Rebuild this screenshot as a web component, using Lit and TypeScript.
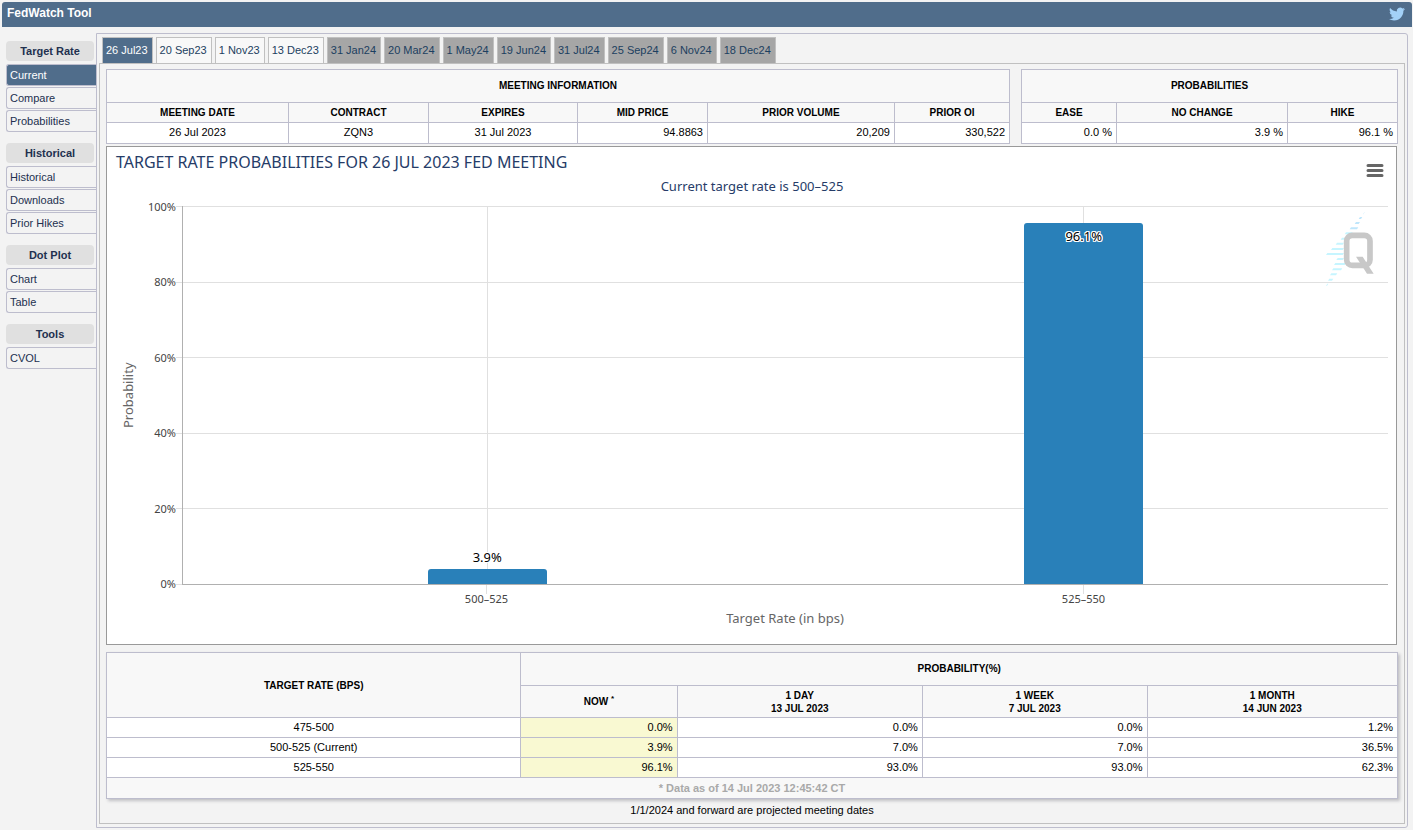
import { LitElement, html, css, svg } from "lit";
import { customElement, property, state } from "lit/decorators.js";
import { classMap } from "lit/directives/class-map.js";

interface Column {
  label: string;
  value: string;
  width: number;
  align: "center" | "right";
}

const MEETINGS = [
  { label: "26 Jul23", projected: false },
  { label: "20 Sep23", projected: false },
  { label: "1 Nov23", projected: false },
  { label: "13 Dec23", projected: false },
  { label: "31 Jan24", projected: true },
  { label: "20 Mar24", projected: true },
  { label: "1 May24", projected: true },
  { label: "19 Jun24", projected: true },
  { label: "31 Jul24", projected: true },
  { label: "25 Sep24", projected: true },
  { label: "6 Nov24", projected: true },
  { label: "18 Dec24", projected: true },
];

const MENU = [
  { title: "Target Rate", items: ["Current", "Compare", "Probabilities"] },
  { title: "Historical", items: ["Historical", "Downloads", "Prior Hikes"] },
  { title: "Dot Plot", items: ["Chart", "Table"] },
  { title: "Tools", items: ["CVOL"] },
];

const MEETING_INFO: Column[] = [
  { label: "Meeting Date", value: "26 Jul 2023", width: 182, align: "center" },
  { label: "Contract", value: "ZQN3", width: 140, align: "center" },
  { label: "Expires", value: "31 Jul 2023", width: 149, align: "center" },
  { label: "Mid Price", value: "94.8863", width: 130, align: "right" },
  { label: "Prior Volume", value: "20,209", width: 187, align: "right" },
  { label: "Prior OI", value: "330,522", width: 115, align: "right" },
];

const MOVES: Column[] = [
  { label: "Ease", value: "0.0 %", width: 95, align: "right" },
  { label: "No Change", value: "3.9 %", width: 171, align: "right" },
  { label: "Hike", value: "96.1 %", width: 110, align: "right" },
];

const HISTORY = [
  { rate: "475-500", values: ["0.0%", "0.0%", "0.0%", "1.2%"] },
  { rate: "500-525 (Current)", values: ["3.9%", "7.0%", "7.0%", "36.5%"] },
  { rate: "525-550", values: ["96.1%", "93.0%", "93.0%", "62.3%"] },
];

const BARS = [
  { range: "500–525", value: 3.9 },
  { range: "525–550", value: 96.1 },
];

const tableStyles = css`
  table {
    width: 100%;
    table-layout: fixed;
    border-collapse: collapse;
    background: #fff;
    color: #000;
    font-size: 11px;
    line-height: 13px;
  }
  th,
  td {
    border: 1px solid #bdbdcd;
    padding: 0 4px;
    height: 20px;
    box-sizing: border-box;
    text-align: center;
  }
  th {
    background: #f8f8f8;
    font-size: 10px;
    text-transform: uppercase;
  }
  .title {
    height: 33px;
    padding-bottom: 1px;
  }
  .right {
    text-align: right;
  }
`;

@customElement("summary-table")
export class SummaryTable extends LitElement {
  @property() heading = "";
  @property({ attribute: false }) columns: Column[] = [];

  static styles = [
    tableStyles,
    css`
      :host {
        display: block;
      }
      td {
        height: 21px;
        padding-bottom: 2px;
      }
    `,
  ];

  render() {
    const total = this.columns.reduce((sum, c) => sum + c.width, 0);
    return html`<table>
      <colgroup>
        ${this.columns.map((c) => html`<col style="width:${(c.width / total) * 100}%" />`)}
      </colgroup>
      <thead>
        <tr><th class="title" colspan=${this.columns.length}>${this.heading}</th></tr>
        <tr>${this.columns.map((c) => html`<th scope="col">${c.label}</th>`)}</tr>
      </thead>
      <tbody>
        <tr>${this.columns.map((c) => html`<td class=${c.align}>${c.value}</td>`)}</tr>
      </tbody>
    </table>`;
  }
}

@customElement("history-table")
export class HistoryTable extends LitElement {
  static styles = [
    tableStyles,
    css`
      :host {
        display: block;
      }
      table {
        box-shadow: 2px 2px 3px #c0c0c4;
      }
      .period {
        height: 32px;
      }
      .now {
        background: #f9f9d2;
      }
      .asof {
        height: 21px;
        background: #f8f8f8;
        color: #a9a9a9;
        font-weight: bold;
      }
      sup {
        font-size: 8px;
        line-height: 0;
      }
      .c-rate {
        width: 32.1%;
      }
      .c-now {
        width: 12.1%;
      }
      .c-day {
        width: 19%;
      }
      .c-week {
        width: 17.4%;
      }
    `,
  ];

  render() {
    return html`<table>
      <colgroup>
        <col class="c-rate" /><col class="c-now" /><col class="c-day" /><col class="c-week" /><col />
      </colgroup>
      <thead>
        <tr>
          <th scope="col" rowspan="2">Target Rate (bps)</th>
          <th class="title" colspan="4">Probability(%)</th>
        </tr>
        <tr>
          <th class="period" scope="col">Now <sup>*</sup></th>
          <th class="period" scope="col">1 Day<br />13 Jul 2023</th>
          <th class="period" scope="col">1 Week<br />7 Jul 2023</th>
          <th class="period" scope="col">1 Month<br />14 Jun 2023</th>
        </tr>
      </thead>
      <tbody>
        ${HISTORY.map(
          (row) => html`<tr>
            <td>${row.rate}</td>
            ${row.values.map((v, i) => html`<td class=${classMap({ right: true, now: i === 0 })}>${v}</td>`)}
          </tr>`
        )}
        <tr><td class="asof" colspan="5">* Data as of 14 Jul 2023 12:45:42 CT</td></tr>
      </tbody>
    </table>`;
  }
}

// Each stripe of the watermark: left edge, right edge, vertical centre.
const STRIPES = [
  [160, 163, 40],
  [146, 157, 54],
  [134, 150, 69],
  [119, 145, 85],
  [104, 128, 100],
  [92, 106, 116],
  [77, 102, 131],
  [63, 102, 147],
  [48, 102, 162],
  [79, 102, 177],
  [72, 108, 192],
  [66, 97, 208],
  [60, 82, 223],
  [54, 70, 239],
  [48, 55, 254],
];

@customElement("probability-chart")
export class ProbabilityChart extends LitElement {
  static styles = css`
    :host {
      display: block;
      position: relative;
      box-sizing: border-box;
      background: #fff;
      border: 1px solid #999;
      padding: 5px 8px 17px 9px;
      font-family: "Lucida Grande", "Lucida Sans Unicode", "Noto Sans", sans-serif;
      color: #274b6d;
    }
    .heading {
      margin: 0;
      font-size: 16px;
      line-height: 20px;
      font-weight: 400;
      color: #263c68;
    }
    .subtitle {
      margin: 0;
      padding: 5px 0 11px;
      font-size: 13px;
      line-height: 18px;
      text-align: center;
      color: #263c68;
    }
    .body {
      display: grid;
      grid-template-columns: 24px 36px 6px 1fr;
      grid-template-rows: 379px auto auto;
    }
    .ytitle {
      writing-mode: vertical-rl;
      transform: rotate(180deg);
      text-align: center;
      font-size: 13px;
      line-height: 18px;
      color: #666;
      justify-self: center;
    }
    .ylabels {
      display: flex;
      flex-direction: column;
      justify-content: space-between;
      margin: -8px 0 -7px;
      text-align: right;
      font-size: 11px;
      line-height: 17px;
      color: #444;
    }
    .lines {
      display: flex;
      flex-direction: column;
      grid-area: 1 / 3 / 2 / 5;
    }
    .line {
      flex: 1;
      border-top: 1px solid #e0e0e0;
    }
    .base {
      border-top: 1px solid #e0e0e0;
    }
    .plot {
      grid-area: 1 / 4;
      display: grid;
      grid-template-columns: 1fr 1fr;
      padding: 0 6px;
      border-left: 1px solid #b0b0b0;
      border-bottom: 1px solid #b0b0b0;
    }
    .category {
      display: flex;
      flex-direction: column;
      justify-content: flex-end;
      align-items: center;
      padding-top: 2px;
      background: linear-gradient(#e0e0e0, #e0e0e0) center / 1px 100% no-repeat;
    }
    .bar {
      width: 20%;
      box-sizing: border-box;
      background: #2980b9;
      border-radius: 3px 3px 0 0;
      text-align: center;
    }
    .value {
      padding: 4px 0 3px;
      font-size: 13px;
      line-height: 18px;
      color: #000;
      text-align: center;
      text-shadow: 1px 0 #fff, -1px 0 #fff, 0 1px #fff, 0 -1px #fff, 1px 1px #fff, -1px -1px #fff, 1px -1px #fff,
        -1px 1px #fff;
    }
    .xlabels {
      grid-area: 2 / 4;
      display: grid;
      grid-template-columns: 1fr 1fr;
      padding: 0 6px;
      text-align: center;
      font-size: 11px;
      line-height: 14px;
      color: #444;
    }
    .xlabels span {
      padding-top: 7px;
      background: linear-gradient(#e0e0e0, #e0e0e0) top center / 1px 9px no-repeat;
    }
    .xtitle {
      grid-area: 3 / 4;
      padding-top: 3px;
      text-align: center;
      font-size: 13px;
      line-height: 18px;
      color: #666;
    }
    .menu {
      position: absolute;
      top: 12px;
      right: 9px;
      width: 24px;
      height: 22px;
      padding: 0;
      border: 0;
      background: none;
    }
    .menu svg {
      display: block;
    }
    .mark {
      position: absolute;
      top: 53px;
      right: 0;
      pointer-events: none;
    }
  `;

  render() {
    return html`
      <h2 class="heading">TARGET RATE PROBABILITIES FOR 26 JUL 2023 FED MEETING</h2>
      <p class="subtitle">Current target rate is 500–525</p>
      <div class="body">
        <div class="ytitle">Probability</div>
        <div class="ylabels">${[100, 80, 60, 40, 20, 0].map((n) => html`<span>${n}%</span>`)}</div>
        <div class="lines">
          ${[1, 2, 3, 4, 5].map(() => html`<div class="line"></div>`)}
          <div class="base"></div>
        </div>
        <div class="plot">
          ${BARS.map((b) => {
            const inside = b.value > 50;
            const label = html`<div class="value">${b.value}%</div>`;
            return html`<div class="category">
              ${inside ? "" : label}
              <div class="bar" style="height:${b.value}%">${inside ? label : ""}</div>
            </div>`;
          })}
        </div>
        <div class="xlabels">${BARS.map((b) => html`<span>${b.range}</span>`)}</div>
        <div class="xtitle">Target Rate (in bps)</div>
      </div>
      <svg class="mark" width="86" height="100" viewBox="0 0 258 300" aria-hidden="true">
        ${STRIPES.map(
          ([x1, x2, y], i) =>
            svg`<path d="M${x1 + 4} ${y - 3}H${x2}L${x2 - 4} ${y + 3}H${x1}Z" fill=${i < 4 ? "#bfe6fb" : "#c6f5ff"} />`
        )}
        <rect x="110" y="106" width="70" height="90" rx="17" fill="none" stroke="#c8c8c8" stroke-width="17" />
        <path d="M138 170H158L191 221H171L160 204Z" fill="#c8c8c8" />
      </svg>
      <button class="menu" aria-label="Chart context menu">
        <svg width="24" height="22" viewBox="0 0 24 22">
          <path d="M5 6.5H19M5 11.5H19M5 16.5H19" stroke="#666" stroke-width="3" stroke-linecap="round" />
        </svg>
      </button>
    `;
  }
}

@customElement("app-root")
export class AppRoot extends LitElement {
  @state() private meeting = 0;
  @state() private page = "Current";

  static styles = css`
    :host {
      display: block;
      box-sizing: border-box;
      min-height: 100vh;
      padding: 2px 1px 2px 2px;
      background: #f3f3f3;
      font-family: "Liberation Sans", Arial, sans-serif;
      font-size: 11px;
      line-height: 13px;
      color: #000;
    }
    .top {
      display: flex;
      justify-content: space-between;
      align-items: center;
      height: 25px;
      padding: 0 7px 0 5px;
      background: #506d8b;
      border-radius: 3px 3px 0 0;
    }
    .brand {
      margin: 0;
      padding-bottom: 3px;
      font-size: 12px;
      line-height: 14px;
      font-weight: bold;
      color: #fff;
    }
    .share {
      display: block;
      padding-bottom: 1px;
    }
    .share svg {
      display: block;
    }
    .layout {
      display: grid;
      grid-template-columns: 94px minmax(0, 1fr);
      padding: 6px 4px 0 0;
    }
    .side {
      display: flex;
      flex-direction: column;
      gap: 11px;
      padding: 8px 0 0 4px;
    }
    .group {
      display: flex;
      flex-direction: column;
      gap: 1px;
    }
    .group h2 {
      margin: 0 2px 2px 0;
      background: #e0e0e0;
      border-radius: 4px;
      font-size: 11px;
      line-height: 20px;
      text-align: center;
      color: #22304f;
    }
    .item {
      border: 1px solid #bdbdcd;
      border-right: 0;
      border-radius: 3px 0 0 3px;
      padding-left: 3px;
      line-height: 20px;
      color: #22304f;
      text-decoration: none;
    }
    .item.on {
      background: #506d8b;
      color: #fff;
      margin-right: -1px;
    }
    .panel {
      border: 1px solid #bdbdcd;
      border-radius: 0 3px 3px 0;
      padding: 3px 2px;
    }
    .tabs {
      display: flex;
      flex-wrap: wrap;
      gap: 3px;
      padding: 0 3px;
    }
    .tab {
      height: 26px;
      padding: 0 4px 0 3px;
      border: 1px solid #c0c0c0;
      border-bottom: 0;
      background: #f8f8f8;
      font: inherit;
      color: #1c3f60;
    }
    .tab.projected {
      background: #a6a6a6;
    }
    .tab.on {
      background: #506d8b;
      color: #fff;
    }
    .content {
      border: 1px solid #c0c0c0;
      padding: 5px 6px 6px;
    }
    .tables {
      display: grid;
      grid-template-columns: 904fr 377fr;
      gap: 11px;
      margin-bottom: 2px;
    }
    .chart {
      margin: 0 1px 7px 0;
    }
    .note {
      margin: 0;
      padding-top: 5px;
      text-align: center;
    }
  `;

  render() {
    return html`
      <header class="top">
        <h1 class="brand">FedWatch Tool</h1>
        <a class="share" href="#" aria-label="Twitter">
          <svg width="16" height="16" viewBox="0 0 24 24" fill="#a3d1f7">
            <path
              d="M23.953 4.57a10 10 0 0 1-2.825.775 4.958 4.958 0 0 0 2.163-2.723c-.951.555-2.005.959-3.127 1.184a4.92 4.92 0 0 0-8.384 4.482C7.69 8.095 4.067 6.13 1.64 3.162a4.822 4.822 0 0 0-.666 2.475c0 1.71.87 3.213 2.188 4.096a4.904 4.904 0 0 1-2.228-.616v.06a4.923 4.923 0 0 0 3.946 4.827 4.996 4.996 0 0 1-2.212.085 4.936 4.936 0 0 0 4.604 3.417 9.867 9.867 0 0 1-6.102 2.105c-.39 0-.779-.023-1.17-.067a13.995 13.995 0 0 0 7.557 2.209c9.053 0 13.998-7.496 13.998-13.985 0-.21 0-.42-.015-.63A9.935 9.935 0 0 0 24 4.59z"
            />
          </svg>
        </a>
      </header>
      <div class="layout">
        <nav class="side">
          ${MENU.map(
            (g) => html`<div class="group">
              <h2>${g.title}</h2>
              ${g.items.map(
                (label) => html`<a
                  class=${classMap({ item: true, on: label === this.page })}
                  href="#"
                  @click=${(e: Event) => {
                    e.preventDefault();
                    this.page = label;
                  }}
                  >${label}</a
                >`
              )}
            </div>`
          )}
        </nav>
        <main class="panel">
          <div class="tabs">
            ${MEETINGS.map(
              (m, i) => html`<button
                class=${classMap({ tab: true, projected: m.projected, on: i === this.meeting })}
                @click=${() => (this.meeting = i)}
              >
                ${m.label}
              </button>`
            )}
          </div>
          <section class="content">
            <div class="tables">
              <summary-table heading="Meeting Information" .columns=${MEETING_INFO}></summary-table>
              <summary-table heading="Probabilities" .columns=${MOVES}></summary-table>
            </div>
            <probability-chart class="chart"></probability-chart>
            <history-table></history-table>
            <p class="note">1/1/2024 and forward are projected meeting dates</p>
          </section>
        </main>
      </div>
    `;
  }
}
